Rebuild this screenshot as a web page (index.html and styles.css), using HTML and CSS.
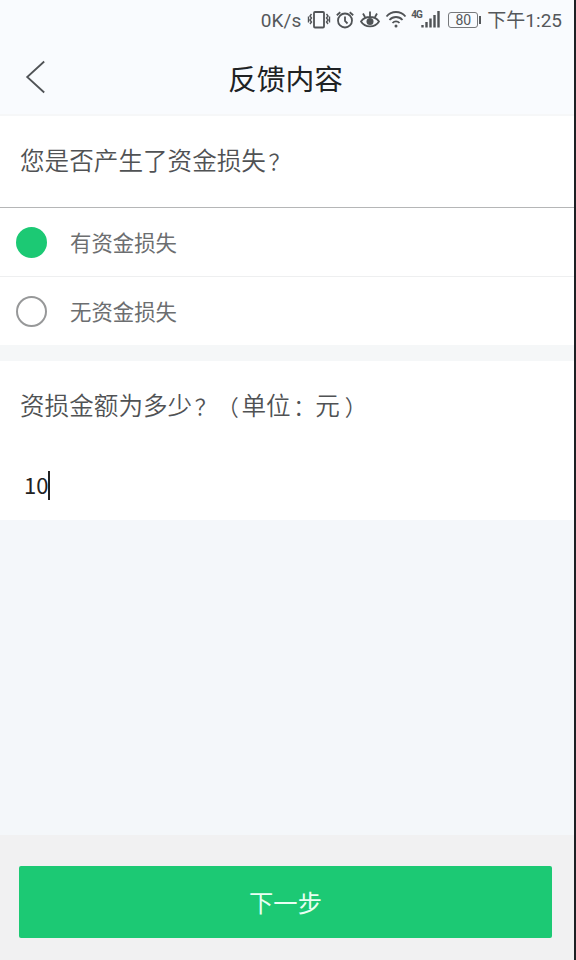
FILE: index.html
```html
<!DOCTYPE html>
<html lang="zh-CN">
<head>
<meta charset="utf-8">
<title>反馈内容</title>
<link rel="stylesheet" href="styles.css">
</head>
<body>
<div class="screen">
  <header class="top">
    <div class="status">
      <span class="speed">0K/s</span>
      <svg class="vibrate" width="24" height="20" viewBox="0 0 24 20"><rect x="7" y="2" width="10" height="15.500" rx="1"/><path class="waves" d="M4.500 4l-1.500 2 1.500 2-1.500 2 1.500 2-1.500 2M1.500 6.500v6M19.500 4l1.500 2-1.500 2 1.500 2-1.500 2 1.500 2M22.500 6.500v6"/></svg>
      <svg class="alarm" width="20" height="20" viewBox="0 0 20 20"><circle cx="10" cy="10.500" r="7"/><path d="M10 6.500v4.500l2.500 2.500M1.800 5.200l3.500-3M18.200 5.200l-3.500-3"/></svg>
      <svg class="eye" width="20" height="20" viewBox="0 0 20 20"><path d="M1 11.500c4-6 14-6 18 0-4 6.500-14 6.500-18 0zM10 1.500v5M3 3.500l2 3.500M17 3.500l-2 3.500"/><circle class="solid" cx="10" cy="11.500" r="3.500"/></svg>
      <svg class="wifi" width="22" height="20" viewBox="0 0 22 20"><path d="M1.500 6.500c5-6 14-6 19 0M4.500 10c3.500-4 9.500-4 13 0M7.500 13c2-2.200 5-2.200 7 0"/><circle class="solid" cx="11" cy="16" r="1.500"/></svg>
      <span class="network">4G</span>
      <svg class="signal" width="19" height="20" viewBox="0 0 19 20"><path d="M1.500 15v2.500M5.500 12v5.500M9.500 8.500v9M13.500 5v12.500M17.500 1v16.500"/></svg>
      <span class="battery">80</span>
      <span class="clock">下午1:25</span>
    </div>
    <div class="navbar">
      <svg class="back" width="20" height="34" viewBox="0 0 20 34"><path d="M19.200 1.500L2.200 17l17 15.500"/></svg>
      <h1>反馈内容</h1>
    </div>
  </header>
  <main>
    <section class="loss">
      <h2>您是否产生了资金损失<span class="mark">？</span></h2>
      <div class="option"><span class="radio checked"></span><span>有资金损失</span></div>
      <div class="option"><span class="radio"></span><span>无资金损失</span></div>
    </section>
    <section class="amount">
      <h2>资损金额为多少<span class="mark">？</span><span class="open">（</span>单位<span class="mark">：</span>元<span class="close">）</span></h2>
      <div class="field"><span>10</span><i class="caret"></i></div>
    </section>
  </main>
  <footer><button type="button">下一步</button></footer>
</div>
</body>
</html>
```

FILE: styles.css
```css
* { box-sizing: border-box; }
body { margin: 0; font-family: "Noto Sans CJK SC", sans-serif; }
.screen {
  width: 576px;
  height: 960px;
  display: flex;
  flex-direction: column;
  border-right: 2px solid #1d2024;
  background: #f4f7fa;
  overflow: hidden;
}
.top { height: 116px; background: #f9fbfe; border-bottom: 2px solid #f6f7f8; }
.status {
  height: 40px;
  padding-right: 12px;
  display: flex;
  align-items: center;
  justify-content: flex-end;
  color: #55585b;
  font-family: Roboto, "Noto Sans CJK SC", sans-serif;
  font-size: 19px;
  line-height: 40px;
  white-space: nowrap;
}
svg { flex: none; fill: none; stroke: #505356; stroke-width: 1.8; }
.solid { fill: #505356; stroke: none; }
.speed { margin-right: 6px; padding-top: 1px; font-size: 19px; letter-spacing: 0.1px; }
.clock { padding-top: 1px; }
.vibrate { margin-right: 4px; }
.waves { stroke-width: 1.4; }
.alarm { margin-right: 5px; }
.eye { margin-right: 5px; }
.wifi { margin-right: 4px; }
.network { align-self: flex-start; width: 10px; font-size: 10px; font-weight: 700; line-height: 30px; letter-spacing: -1px; }
.signal { stroke-width: 2.400; }
.battery {
  position: relative;
  width: 30px;
  height: 16px;
  margin: 0 9px 0 8px;
  border: 1px solid #77797c;
  border-radius: 3px;
  font-size: 14px;
  line-height: 15px;
  text-align: center;
}
.battery::after {
  content: "";
  position: absolute;
  right: -4px;
  top: 3px;
  width: 2px;
  height: 8px;
  background: #55585b;
}
.navbar { height: 74px; padding: 0 28px 0 25px; display: grid; grid-template-columns: 20px 1fr 20px; align-items: center; }
.back { stroke: #505356; }
h1 { margin: 1px 0 0; color: #202224; font-size: 28.8px; font-weight: 400; line-height: 40px; text-align: center; }
h2 { margin: 0; padding-left: 20px; color: #505254; font-size: 24.6px; font-weight: 350; }
.mark { margin-left: 2.6px; font-size: 22px; }
.open { font-size: 22px; margin-right: 2.6px; }
.close { margin-left: 5px; font-size: 22px; }
.loss { background: #fff; }
.loss h2 { height: 92px; line-height: 86px; border-bottom: 1px solid #b5b6b7; }
.option {
  height: 68px;
  padding-left: 16px;
  display: flex;
  align-items: center;
  gap: 23px;
  color: #6c6e70;
  font-size: 21.4px;
  line-height: 32px;
}
.option + .option { height: 69px; border-top: 1px solid #eeeff0; }
.option span:last-child { padding-bottom: 1px; }
.radio { width: 31px; height: 31px; border: 2px solid #979899; border-radius: 50%; }
.checked { border-color: #1cc974; background: #1cc974; }
.amount { height: 175px; border-top: 16px solid #f5f7f8; background: #fff; }
.amount h2 { height: 88px; line-height: 86px; }
.field { height: 72px; padding: 0 0 0 24px; display: flex; align-items: center; color: #222; font-size: 22px; line-height: 32px; }
.field span { padding-bottom: 2px; }
.caret { width: 2px; height: 29px; background: #222; }
footer { height: 125px; margin-top: auto; padding: 31px 22px 22px 19px; background: #f1f1f2; }
button {
  width: 100%;
  height: 72px;
  padding: 0;
  border: 0;
  border-radius: 2px;
  background: #1cc974;
  color: #e9fff3;
  font-family: inherit;
  font-size: 24.300px;
  line-height: 72px;
}
```
